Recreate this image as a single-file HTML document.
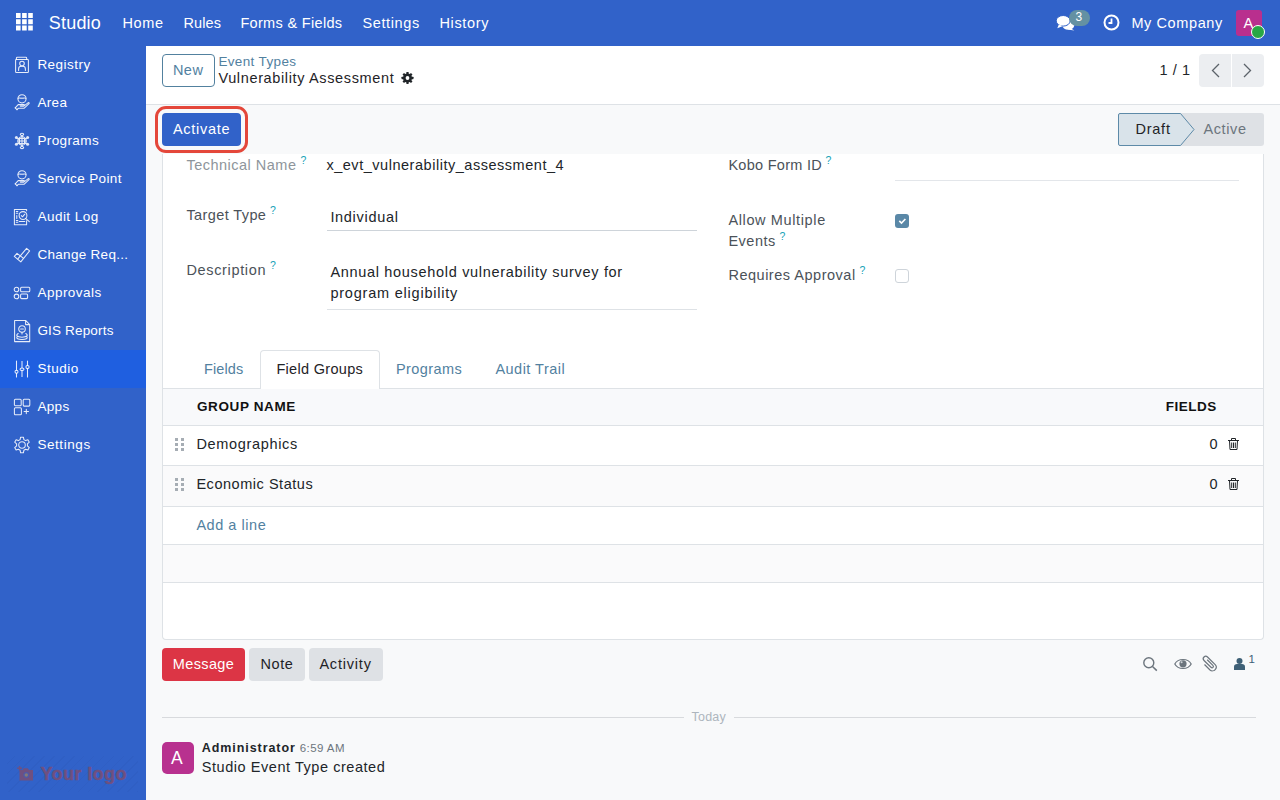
<!DOCTYPE html><html><head><meta charset="utf-8"><style>
*{box-sizing:border-box;margin:0;padding:0}
html,body{width:1280px;height:800px;overflow:hidden}
body{font-family:"Liberation Sans",sans-serif;font-size:14.5px;color:#212529;background:#f8f9fa;position:relative}
.a{position:absolute;white-space:nowrap}
.r{position:absolute}
svg{position:absolute;overflow:visible}
</style></head><body>
<div class="r" style="left:0;top:0;width:1280px;height:46px;background:#3162c9"></div>
<svg style="left:16px;top:13px" width="17" height="18" viewBox="0 0 17 18" fill="#fff"><rect x="0" y="0" width="4.6" height="5" /><rect x="6.1" y="0" width="4.6" height="5" /><rect x="12.2" y="0" width="4.6" height="5" /><rect x="0" y="6.25" width="4.6" height="5" /><rect x="6.1" y="6.25" width="4.6" height="5" /><rect x="12.2" y="6.25" width="4.6" height="5" /><rect x="0" y="12.5" width="4.6" height="5" /><rect x="6.1" y="12.5" width="4.6" height="5" /><rect x="12.2" y="12.5" width="4.6" height="5" /></svg>
<div class="a " style="left:48.80px;top:11.16px;font-size:18.0px;line-height:25px;letter-spacing:0.193px;color:#fff">Studio</div>
<div class="a " style="left:122.40px;top:13.18px;font-size:14.5px;line-height:20px;letter-spacing:0.667px;color:#fff">Home</div>
<div class="a " style="left:183.40px;top:13.18px;font-size:14.5px;line-height:20px;letter-spacing:0.140px;color:#fff">Rules</div>
<div class="a " style="left:240.40px;top:13.18px;font-size:14.5px;line-height:20px;letter-spacing:0.322px;color:#fff">Forms &amp; Fields</div>
<div class="a " style="left:362.40px;top:13.18px;font-size:14.5px;line-height:20px;letter-spacing:0.629px;color:#fff">Settings</div>
<div class="a " style="left:439.40px;top:13.18px;font-size:14.5px;line-height:20px;letter-spacing:0.671px;color:#fff">History</div>
<svg style="left:1056px;top:15px" width="19" height="16" viewBox="0 0 19 16"><ellipse cx="12.3" cy="10.6" rx="6" ry="4.2" fill="#fff"/><path d="M15 13.5 L18.3 15.6 L11.5 14.6z" fill="#fff"/><ellipse cx="7.2" cy="5.8" rx="7" ry="5.3" fill="#fff" stroke="#3162c9" stroke-width="1"/><path d="M2.8 9.5 L1.3 13.2 L7 11z" fill="#fff"/></svg>
<div class="r" style="left:1069px;top:10px;width:20.5px;height:16px;border-radius:8px;background:#6491a3"></div>
<div class="a " style="left:1075.40px;top:8.54px;font-size:12.0px;line-height:17px;letter-spacing:0.644px;color:#fff">3</div>
<svg style="left:1103px;top:14px" width="17" height="17" viewBox="0 0 17 17"><circle cx="8.5" cy="8.5" r="7" fill="none" stroke="#fff" stroke-width="2"/><path d="M8.5 4.5 V9 H5.5" fill="none" stroke="#fff" stroke-width="1.8"/></svg>
<div class="a " style="left:1131.40px;top:13.38px;font-size:14.5px;line-height:20px;letter-spacing:0.601px;color:#fff">My Company</div>
<div class="r" style="left:1236px;top:10px;width:26px;height:26px;border-radius:3px;background:#b92f8e"></div>
<div class="a " style="left:1243.40px;top:12.98px;font-size:14.5px;line-height:20px;letter-spacing:-0.095px;color:#fff">A</div>
<div class="r" style="left:1251px;top:25px;width:14px;height:14px;border-radius:50%;background:#28a745;border:1.5px solid #fff"></div>
<div class="r" style="left:0;top:46px;width:146px;height:754px;background:#3162c9"></div>
<div class="r" style="left:0;top:350px;width:146px;height:38px;background:#1f5fe0"></div>
<div class="a " style="left:37.40px;top:54.82px;font-size:13.5px;line-height:19px;letter-spacing:0.464px;color:#fff">Registry</div>
<div class="a " style="left:37.40px;top:92.82px;font-size:13.5px;line-height:19px;letter-spacing:0.350px;color:#fff">Area</div>
<div class="a " style="left:37.40px;top:130.82px;font-size:13.5px;line-height:19px;letter-spacing:0.389px;color:#fff">Programs</div>
<div class="a " style="left:37.40px;top:168.82px;font-size:13.5px;line-height:19px;letter-spacing:0.378px;color:#fff">Service Point</div>
<div class="a " style="left:37.40px;top:206.82px;font-size:13.5px;line-height:19px;letter-spacing:0.489px;color:#fff">Audit Log</div>
<div class="a " style="left:37.40px;top:244.82px;font-size:13.5px;line-height:19px;letter-spacing:0.303px;color:#fff">Change Req...</div>
<div class="a " style="left:37.40px;top:282.82px;font-size:13.5px;line-height:19px;letter-spacing:0.491px;color:#fff">Approvals</div>
<div class="a " style="left:37.40px;top:320.82px;font-size:13.5px;line-height:19px;letter-spacing:0.171px;color:#fff">GIS Reports</div>
<div class="a " style="left:37.40px;top:358.82px;font-size:13.5px;line-height:19px;letter-spacing:0.521px;color:#fff">Studio</div>
<div class="a " style="left:37.40px;top:396.82px;font-size:13.5px;line-height:19px;letter-spacing:0.350px;color:#fff">Apps</div>
<div class="a " style="left:37.40px;top:434.82px;font-size:13.5px;line-height:19px;letter-spacing:0.568px;color:#fff">Settings</div>
<svg style="left:12px;top:54px" width="20" height="22" viewBox="0 0 20 22"><rect x="3.6" y="5.4" width="12.8" height="13.1" rx="0.8" fill="none" stroke="#fff" stroke-opacity="0.88" stroke-width="1.05" stroke-linecap="round" stroke-linejoin="round"/><path d="M4.4 5.4 V4.2 Q4.4 3.3 5.3 3.3 H13.8 Q14.7 3.3 14.7 4.2 V5.4" fill="none" stroke="#fff" stroke-opacity="0.88" stroke-width="1.05" stroke-linecap="round" stroke-linejoin="round"/><circle cx="10" cy="9.6" r="2.3" fill="none" stroke="#fff" stroke-opacity="0.88" stroke-width="1.05" stroke-linecap="round" stroke-linejoin="round"/><path d="M6.6 16.4 V15 C6.6 13.3 7.9 12.3 9.2 12.3 H10.8 C12.1 12.3 13.4 13.3 13.4 15 V16.4" fill="none" stroke="#fff" stroke-opacity="0.88" stroke-width="1.05" stroke-linecap="round" stroke-linejoin="round"/></svg>
<svg style="left:12px;top:92px" width="20" height="22" viewBox="0 0 20 22"><circle cx="10" cy="6.8" r="4.1" fill="none" stroke="#fff" stroke-opacity="0.88" stroke-width="1.05" stroke-linecap="round" stroke-linejoin="round"/><path d="M6.2 6.3 C7.5 5.2 8.5 7 10 6 C11.5 7 12.5 5.2 13.8 6.3" fill="none" stroke="#fff" stroke-opacity="0.88" stroke-width="1.05" stroke-linecap="round" stroke-linejoin="round"/><path d="M3.2 15.8 L6.2 12.6 H11.8 C12.6 12.6 12.6 14 11.8 14.1 H8.3 M11.8 14.1 L16.3 10.7 C17 10.3 17.5 11.2 17 11.7 L12 16.3 H6.3 L5 17.6" fill="none" stroke="#fff" stroke-opacity="0.88" stroke-width="1.05" stroke-linecap="round" stroke-linejoin="round"/><path d="M3.2 15.8 L5 17.6" fill="none" stroke="#fff" stroke-opacity="0.88" stroke-width="1.05" stroke-linecap="round" stroke-linejoin="round"/></svg>
<svg style="left:12px;top:130px" width="20" height="22" viewBox="0 0 20 22"><circle cx="10" cy="11" r="4.2" fill="none" stroke="#fff" stroke-opacity="0.88" stroke-width="1.05" stroke-linecap="round" stroke-linejoin="round"/><path d="M6 11 H14 M10 7 V15 M7.5 8.5 H12.5 V13.5 H7.5 Z" fill="none" stroke="#fff" stroke-opacity="0.88" stroke-width="1.05" stroke-linecap="round" stroke-linejoin="round" stroke-width="0.8"/><path d="M10 6.8 V5.5 M10 15.2 V16.3 M6.4 9 L5.6 8.4 M13.6 9 L14.4 8.4 M6.4 13 L5.6 13.6 M13.6 13 L14.4 13.6" fill="none" stroke="#fff" stroke-opacity="0.88" stroke-width="1.05" stroke-linecap="round" stroke-linejoin="round"/><ellipse cx="10" cy="4.3" rx="1.7" ry="1.1" fill="none" stroke="#fff" stroke-opacity="0.88" stroke-width="1.05" stroke-linecap="round" stroke-linejoin="round"/><ellipse cx="10" cy="17.5" rx="1.7" ry="1.1" fill="none" stroke="#fff" stroke-opacity="0.88" stroke-width="1.05" stroke-linecap="round" stroke-linejoin="round"/><circle cx="4.4" cy="7.6" r="1.5" fill="#fff" fill-opacity=".85"/><circle cx="15.6" cy="7.6" r="1.5" fill="#fff" fill-opacity=".85"/><circle cx="4.4" cy="14.3" r="1.5" fill="#fff" fill-opacity=".85"/><circle cx="15.6" cy="14.3" r="1.5" fill="#fff" fill-opacity=".85"/></svg>
<svg style="left:12px;top:168px" width="20" height="22" viewBox="0 0 20 22"><circle cx="10" cy="6.8" r="4.1" fill="none" stroke="#fff" stroke-opacity="0.88" stroke-width="1.05" stroke-linecap="round" stroke-linejoin="round"/><path d="M6.2 6.3 C7.5 5.2 8.5 7 10 6 C11.5 7 12.5 5.2 13.8 6.3" fill="none" stroke="#fff" stroke-opacity="0.88" stroke-width="1.05" stroke-linecap="round" stroke-linejoin="round"/><path d="M3.2 15.8 L6.2 12.6 H11.8 C12.6 12.6 12.6 14 11.8 14.1 H8.3 M11.8 14.1 L16.3 10.7 C17 10.3 17.5 11.2 17 11.7 L12 16.3 H6.3 L5 17.6" fill="none" stroke="#fff" stroke-opacity="0.88" stroke-width="1.05" stroke-linecap="round" stroke-linejoin="round"/><path d="M3.2 15.8 L5 17.6" fill="none" stroke="#fff" stroke-opacity="0.88" stroke-width="1.05" stroke-linecap="round" stroke-linejoin="round"/></svg>
<svg style="left:12px;top:206px" width="20" height="22" viewBox="0 0 20 22"><path d="M14.6 4.8 V3.4 H2.4 V18.7 H14.6 V14.8" fill="none" stroke="#fff" stroke-opacity="0.88" stroke-width="1.05" stroke-linecap="round" stroke-linejoin="round"/><circle cx="11" cy="9.5" r="3.9" fill="none" stroke="#fff" stroke-opacity="0.88" stroke-width="1.05" stroke-linecap="round" stroke-linejoin="round"/><path d="M9.3 9.6 L10.5 10.8 L12.8 8.2 M13.8 12.6 L17.3 15.6 M4.3 5.5 H5.8 M4.3 7.2 H5.8 M4.8 9.5 V12.5 M4.3 14.5 H5.8 M4.3 16.3 H5.8 M7.2 15.5 H12.8" fill="none" stroke="#fff" stroke-opacity="0.88" stroke-width="1.05" stroke-linecap="round" stroke-linejoin="round"/></svg>
<svg style="left:12px;top:244px" width="20" height="22" viewBox="0 0 20 22"><path d="M2.3 12.4 L5 9.4 L8.3 11.9 L14.6 4.4 L17.6 6.9 L8.8 17.9 Z M8.3 11.9 L5.5 15.3 M8.3 11.9 L11.2 14.2" fill="none" stroke="#fff" stroke-opacity="0.88" stroke-width="1.05" stroke-linecap="round" stroke-linejoin="round"/></svg>
<svg style="left:12px;top:282px" width="20" height="22" viewBox="0 0 20 22"><circle cx="4.5" cy="7.5" r="2.3" fill="none" stroke="#fff" stroke-opacity="0.88" stroke-width="1.05" stroke-linecap="round" stroke-linejoin="round"/><circle cx="4.5" cy="14.4" r="2.3" fill="none" stroke="#fff" stroke-opacity="0.88" stroke-width="1.05" stroke-linecap="round" stroke-linejoin="round"/><rect x="8.6" y="5.2" width="9.2" height="4.6" rx="1" fill="none" stroke="#fff" stroke-opacity="0.88" stroke-width="1.05" stroke-linecap="round" stroke-linejoin="round"/><rect x="8.6" y="12" width="7" height="4.6" rx="1" fill="none" stroke="#fff" stroke-opacity="0.88" stroke-width="1.05" stroke-linecap="round" stroke-linejoin="round"/></svg>
<svg style="left:12px;top:320px" width="20" height="22" viewBox="0 0 20 22"><path d="M2.6 0.4 H13.6 L17.7 4.6 V21.6 H2.6 Z M13.6 0.4 V4.6 H17.7" fill="none" stroke="#fff" stroke-opacity="0.88" stroke-width="1.05" stroke-linecap="round" stroke-linejoin="round"/><circle cx="10" cy="9" r="3.3" fill="none" stroke="#fff" stroke-opacity="0.88" stroke-width="1.05" stroke-linecap="round" stroke-linejoin="round"/><path d="M8.6 9 H11.4 M10 12.3 L10 14" fill="none" stroke="#fff" stroke-opacity="0.88" stroke-width="1.05" stroke-linecap="round" stroke-linejoin="round"/><path d="M6.2 13.5 C3.5 15 4.5 17 10 17.2 C15.5 17 16.5 15 13.8 13.5 M5.2 16.5 C4 18.5 6 19.5 10 19.5 C14 19.5 16 18.5 14.8 16.5" fill="none" stroke="#fff" stroke-opacity="0.88" stroke-width="1.05" stroke-linecap="round" stroke-linejoin="round"/></svg>
<svg style="left:12px;top:358px" width="20" height="22" viewBox="0 0 20 22"><path d="M4.5 3 V12.3 M4.5 15.3 V19 M15.5 3 V7.4 M15.5 10.6 V19" fill="none" stroke="#fff" stroke-opacity="0.88" stroke-width="1.05" stroke-linecap="round" stroke-linejoin="round"/><path d="M10 3 V19" stroke="#fff" stroke-opacity=".5" stroke-width="1.8"/><circle cx="4.5" cy="13.8" r="1.5" fill="none" stroke="#fff" stroke-opacity="0.88" stroke-width="1.05" stroke-linecap="round" stroke-linejoin="round"/><circle cx="15.5" cy="9" r="1.6" fill="none" stroke="#fff" stroke-opacity="0.88" stroke-width="1.05" stroke-linecap="round" stroke-linejoin="round"/><ellipse cx="10" cy="11.3" rx="2" ry="1.3" fill="#1f5fe0" stroke="#fff" stroke-opacity="0.88" stroke-width="1.05" stroke-linecap="round" stroke-linejoin="round"/></svg>
<svg style="left:12px;top:396px" width="20" height="22" viewBox="0 0 20 22"><rect x="2.4" y="3.3" width="6.8" height="6.4" rx="1" fill="none" stroke="#fff" stroke-opacity="0.88" stroke-width="1.05" stroke-linecap="round" stroke-linejoin="round"/><rect x="11.2" y="3.3" width="6.6" height="6.8" rx="1" fill="none" stroke="#fff" stroke-opacity="0.88" stroke-width="1.05" stroke-linecap="round" stroke-linejoin="round"/><rect x="2.4" y="11.8" width="7" height="7" rx="1" fill="none" stroke="#fff" stroke-opacity="0.88" stroke-width="1.05" stroke-linecap="round" stroke-linejoin="round"/><path d="M14.3 13.2 V17.6 M12.1 15.4 H16.5" fill="none" stroke="#fff" stroke-opacity="0.88" stroke-width="1.05" stroke-linecap="round" stroke-linejoin="round"/></svg>
<svg style="left:12px;top:434px" width="20" height="22" viewBox="0 0 20 22"><path d="M8.6 3.2 H11.4 L11.9 5.6 L13.6 6.6 L15.9 5.8 L17.3 8.2 L15.4 9.8 V11.8 L17.3 13.6 L15.9 16 L13.6 15.2 L11.9 16.2 L11.4 18.8 H8.6 L8.1 16.2 L6.4 15.2 L4.1 16 L2.7 13.6 L4.6 11.8 V9.8 L2.7 8.2 L4.1 5.8 L6.4 6.6 L8.1 5.6 Z" fill="none" stroke="#fff" stroke-opacity="0.88" stroke-width="1.05" stroke-linecap="round" stroke-linejoin="round"/><circle cx="10" cy="11" r="3.3" fill="none" stroke="#fff" stroke-opacity="0.88" stroke-width="1.05" stroke-linecap="round" stroke-linejoin="round"/></svg>
<div class="r" style="left:7px;top:756px;width:131px;height:36px;background:repeating-linear-gradient(-45deg,rgba(0,0,40,0.03) 0 1px,transparent 1px 7px)"></div>
<svg style="left:17px;top:766px" width="17" height="15" viewBox="0 0 17 15"><path d="M2.5 4 H5.5 L6.8 2.3 H10.8 L12 4 H16 V14.6 H2.5 Z" fill="#6f5080"/><circle cx="9.3" cy="9" r="3" fill="#4e5aa8"/><circle cx="9.3" cy="9" r="1.7" fill="#857a78"/><path d="M0.3 2.2 H5 M2.6 0 V4.5" stroke="#6f5080" stroke-width="1.5"/></svg>
<div class="a " style="left:40.40px;top:761.56px;font-size:18.0px;line-height:25px;letter-spacing:0.427px;font-weight:bold;color:#6f5080;-webkit-text-stroke:0.5px #6f5080">Your logo</div>
<div class="r" style="left:146px;top:46px;width:1134px;height:59px;background:#fff;border-bottom:1px solid #dee2e6"></div>
<div class="r" style="left:162px;top:54px;width:53px;height:33px;border:1px solid #52819f;border-radius:4px"></div>
<div class="a " style="left:172.90px;top:59.98px;font-size:14.5px;line-height:20px;letter-spacing:0.510px;color:#52819f">New</div>
<div class="a " style="left:218.40px;top:51.52px;font-size:13.5px;line-height:19px;letter-spacing:0.360px;color:#52819f">Event Types</div>
<div class="a " style="left:218.40px;top:67.78px;font-size:14.5px;line-height:20px;letter-spacing:0.639px;color:#1f2327">Vulnerability Assessment</div>
<svg style="left:401px;top:72px" width="13" height="12" viewBox="-6.5 -6 13 12"><g fill="#212529"><circle r="4.5"/><rect x="-1.15" y="-6" width="2.3" height="3" rx="0.4" transform="rotate(0)"/><rect x="-1.15" y="-6" width="2.3" height="3" rx="0.4" transform="rotate(45)"/><rect x="-1.15" y="-6" width="2.3" height="3" rx="0.4" transform="rotate(90)"/><rect x="-1.15" y="-6" width="2.3" height="3" rx="0.4" transform="rotate(135)"/><rect x="-1.15" y="-6" width="2.3" height="3" rx="0.4" transform="rotate(180)"/><rect x="-1.15" y="-6" width="2.3" height="3" rx="0.4" transform="rotate(225)"/><rect x="-1.15" y="-6" width="2.3" height="3" rx="0.4" transform="rotate(270)"/><rect x="-1.15" y="-6" width="2.3" height="3" rx="0.4" transform="rotate(315)"/></g><circle r="1.9" fill="#fff"/></svg>
<div class="a " style="left:1159.40px;top:60.18px;font-size:14.5px;line-height:20px;letter-spacing:0.644px;color:#212529">1 / 1</div>
<div class="r" style="left:1199px;top:54px;width:32px;height:33px;background:#eceef1;border-radius:4px 0 0 4px"></div>
<div class="r" style="left:1232px;top:54px;width:32px;height:33px;background:#eceef1;border-radius:0 4px 4px 0"></div>
<svg style="left:1211px;top:63px" width="9" height="15" viewBox="0 0 9 15"><path d="M8 1 L1.5 7.5 L8 14" fill="none" stroke="#5c636a" stroke-width="1.3"/></svg>
<svg style="left:1243px;top:63px" width="9" height="15" viewBox="0 0 9 15"><path d="M1 1 L7.5 7.5 L1 14" fill="none" stroke="#5c636a" stroke-width="1.3"/></svg>
<div class="r" style="left:155.3px;top:106px;width:92.9px;height:46.7px;border:3.4px solid #e4473a;border-radius:11px"></div>
<div class="r" style="left:162px;top:113px;width:79px;height:33px;background:#3162c9;border-radius:4px"></div>
<div class="a " style="left:172.90px;top:119.18px;font-size:14.5px;line-height:20px;letter-spacing:0.725px;color:#fff">Activate</div>
<svg style="left:1118px;top:113px" width="146" height="33" viewBox="0 0 146 33"><path d="M62 0 H143 A3 3 0 0 1 146 3 V30 A3 3 0 0 1 143 33 H62 Z" fill="#dee1e5"/><path d="M2 0.5 H62.5 L76 16.5 L62.5 32.5 H2 A1.5 1.5 0 0 1 0.5 31 V2 A1.5 1.5 0 0 1 2 0.5 Z" fill="#d9e3ea" stroke="#5d8aa8" stroke-width="1"/></svg>
<div class="a " style="left:1135.40px;top:118.78px;font-size:14.5px;line-height:20px;letter-spacing:0.773px;color:#1f2327">Draft</div>
<div class="a " style="left:1203.40px;top:118.78px;font-size:14.5px;line-height:20px;letter-spacing:0.637px;color:#6c757d">Active</div>
<div class="r" style="left:162px;top:154px;width:1102px;height:486px;background:#fff;border:1px solid #dee2e6;border-top:none;border-radius:0 0 4px 4px"></div>
<div class="a " style="left:186.40px;top:154.98px;font-size:14.5px;line-height:20px;letter-spacing:0.492px;color:#8e959b">Technical Name</div>
<div class="a " style="left:300.60px;top:153.36px;font-size:10.5px;line-height:15px;letter-spacing:-0.531px;color:#17a2b8">?</div>
<div class="a " style="left:326.40px;top:154.98px;font-size:14.5px;line-height:20px;letter-spacing:0.529px">x_evt_vulnerability_assessment_4</div>
<div class="a " style="left:186.40px;top:204.98px;font-size:14.5px;line-height:20px;letter-spacing:0.402px;color:#4b5259">Target Type</div>
<div class="a " style="left:270.10px;top:203.36px;font-size:10.5px;line-height:15px;letter-spacing:-0.531px;color:#17a2b8">?</div>
<div class="a " style="left:330.40px;top:207.18px;font-size:14.5px;line-height:20px;letter-spacing:0.692px">Individual</div>
<div class="r" style="left:327px;top:230px;width:370px;height:1px;background:#ced4da"></div>
<div class="a " style="left:186.40px;top:259.98px;font-size:14.5px;line-height:20px;letter-spacing:0.655px;color:#4b5259">Description</div>
<div class="a " style="left:270.10px;top:258.36px;font-size:10.5px;line-height:15px;letter-spacing:-0.531px;color:#17a2b8">?</div>
<div class="a " style="left:330.40px;top:262.48px;font-size:14.5px;line-height:20px;letter-spacing:0.685px">Annual household vulnerability survey for</div>
<div class="a " style="left:330.40px;top:283.38px;font-size:14.5px;line-height:20px;letter-spacing:0.784px">program eligibility</div>
<div class="r" style="left:327px;top:309px;width:370px;height:1px;background:#dee2e6"></div>
<div class="a " style="left:728.40px;top:154.68px;font-size:14.5px;line-height:20px;letter-spacing:0.278px;color:#4b5259">Kobo Form ID</div>
<div class="a " style="left:825.60px;top:153.06px;font-size:10.5px;line-height:15px;letter-spacing:-0.531px;color:#17a2b8">?</div>
<div class="r" style="left:895px;top:180px;width:344px;height:1px;background:#e3e6ea"></div>
<div class="a " style="left:728.40px;top:209.98px;font-size:14.5px;line-height:20px;letter-spacing:0.628px;color:#4b5259">Allow Multiple</div>
<div class="a " style="left:728.40px;top:230.58px;font-size:14.5px;line-height:20px;letter-spacing:0.512px;color:#4b5259">Events</div>
<div class="a " style="left:779.60px;top:228.96px;font-size:10.5px;line-height:15px;letter-spacing:-0.531px;color:#17a2b8">?</div>
<div class="r" style="left:895px;top:214px;width:14px;height:14px;border-radius:3px;background:#5a88a7"></div>
<svg style="left:895px;top:214px" width="14" height="14" viewBox="0 0 14 14"><path d="M4.3 6.9 L6.5 9.1 L10.4 5" fill="none" stroke="#fff" stroke-width="1.6"/></svg>
<div class="a " style="left:728.40px;top:264.98px;font-size:14.5px;line-height:20px;letter-spacing:0.518px;color:#4b5259">Requires Approval</div>
<div class="a " style="left:859.60px;top:263.36px;font-size:10.5px;line-height:15px;letter-spacing:-0.531px;color:#17a2b8">?</div>
<div class="r" style="left:895px;top:269px;width:14px;height:14px;border-radius:3px;background:#fff;border:1px solid #ced4da"></div>
<div class="r" style="left:163px;top:388px;width:1100px;height:1px;background:#dee2e6"></div>
<div class="r" style="left:260px;top:350px;width:120px;height:39px;background:#fff;border:1px solid #dee2e6;border-bottom:none;border-radius:4px 4px 0 0"></div>
<div class="a " style="left:203.90px;top:358.58px;font-size:14.5px;line-height:20px;letter-spacing:0.155px;color:#52819f">Fields</div>
<div class="a " style="left:276.40px;top:358.58px;font-size:14.5px;line-height:20px;letter-spacing:0.306px;color:#1f2327">Field Groups</div>
<div class="a " style="left:395.90px;top:358.58px;font-size:14.5px;line-height:20px;letter-spacing:0.440px;color:#52819f">Programs</div>
<div class="a " style="left:495.40px;top:358.58px;font-size:14.5px;line-height:20px;letter-spacing:0.482px;color:#52819f">Audit Trail</div>
<div class="r" style="left:163px;top:389px;width:1100px;height:36px;background:#f8f9fb"></div>
<div class="r" style="left:163px;top:425px;width:1100px;height:1px;background:#dee2e6"></div>
<div class="a " style="left:196.90px;top:396.62px;font-size:13.5px;line-height:19px;letter-spacing:0.624px;font-weight:bold;color:#111">GROUP NAME</div>
<div class="a " style="left:1165.70px;top:396.82px;font-size:13.5px;line-height:19px;letter-spacing:0.499px;font-weight:bold;color:#111">FIELDS</div>
<div class="r" style="left:163px;top:466px;width:1100px;height:40px;background:#fafafb"></div>
<div class="r" style="left:163px;top:545px;width:1100px;height:37px;background:#fafafb"></div>
<div class="r" style="left:163px;top:465px;width:1100px;height:1px;background:#dee2e6"></div>
<div class="r" style="left:163px;top:506px;width:1100px;height:1px;background:#dee2e6"></div>
<div class="r" style="left:163px;top:544px;width:1100px;height:1px;background:#dee2e6"></div>
<div class="r" style="left:163px;top:582px;width:1100px;height:1px;background:#dee2e6"></div>
<svg style="left:175px;top:438px" width="9" height="13" viewBox="0 0 9 13" fill="#a6adb4"><rect x="0" y="0" width="3" height="3"/><rect x="6" y="0" width="3" height="3"/><rect x="0" y="5" width="3" height="3"/><rect x="6" y="5" width="3" height="3"/><rect x="0" y="10" width="3" height="3"/><rect x="6" y="10" width="3" height="3"/></svg>
<div class="a " style="left:196.40px;top:434.28px;font-size:14.5px;line-height:20px;letter-spacing:0.665px">Demographics</div>
<div class="a " style="left:1209.40px;top:433.88px;font-size:14.5px;line-height:20px;letter-spacing:0.844px">0</div>
<svg style="left:1228px;top:438px" width="11" height="12" viewBox="0 0 11 12"><path d="M0 2.5 H11 M3.5 2.5 V0.5 H7.5 V2.5 M1.5 2.5 L2 11.5 H9 L9.5 2.5 M3.7 4.5 V10 M5.5 4.5 V10 M7.3 4.5 V10" fill="none" stroke="#212529" stroke-width="1"/></svg>
<svg style="left:175px;top:478px" width="9" height="13" viewBox="0 0 9 13" fill="#a6adb4"><rect x="0" y="0" width="3" height="3"/><rect x="6" y="0" width="3" height="3"/><rect x="0" y="5" width="3" height="3"/><rect x="6" y="5" width="3" height="3"/><rect x="0" y="10" width="3" height="3"/><rect x="6" y="10" width="3" height="3"/></svg>
<div class="a " style="left:196.40px;top:473.98px;font-size:14.5px;line-height:20px;letter-spacing:0.536px">Economic Status</div>
<div class="a " style="left:1209.40px;top:473.98px;font-size:14.5px;line-height:20px;letter-spacing:0.844px">0</div>
<svg style="left:1228px;top:478px" width="11" height="12" viewBox="0 0 11 12"><path d="M0 2.5 H11 M3.5 2.5 V0.5 H7.5 V2.5 M1.5 2.5 L2 11.5 H9 L9.5 2.5 M3.7 4.5 V10 M5.5 4.5 V10 M7.3 4.5 V10" fill="none" stroke="#212529" stroke-width="1"/></svg>
<div class="a " style="left:196.40px;top:514.78px;font-size:14.5px;line-height:20px;letter-spacing:0.536px;color:#52819f">Add a line</div>
<div class="r" style="left:162px;top:648px;width:83px;height:33px;background:#dc3545;border-radius:4px"></div>
<div class="r" style="left:249px;top:648px;width:56px;height:33px;background:#dee1e5;border-radius:4px"></div>
<div class="r" style="left:309px;top:648px;width:74px;height:33px;background:#dee1e5;border-radius:4px"></div>
<div class="a " style="left:172.80px;top:653.98px;font-size:14.5px;line-height:20px;letter-spacing:0.361px;color:#fff">Message</div>
<div class="a " style="left:260.40px;top:653.98px;font-size:14.5px;line-height:20px;letter-spacing:0.629px;color:#1f2327">Note</div>
<div class="a " style="left:319.40px;top:653.98px;font-size:14.5px;line-height:20px;letter-spacing:0.804px;color:#1f2327">Activity</div>
<svg style="left:1143px;top:657px" width="15" height="14" viewBox="0 0 15 14"><circle cx="5.8" cy="5.8" r="5" fill="none" stroke="#6c757d" stroke-width="1.4"/><path d="M9.5 9.5 L13.8 13.6" stroke="#6c757d" stroke-width="1.5"/></svg>
<svg style="left:1174px;top:658px" width="18" height="12" viewBox="0 0 18 12"><path d="M0.8 6 C4 0 14 0 17.2 6 C14 12 4 12 0.8 6 Z" fill="none" stroke="#6c757d" stroke-width="1.2"/><circle cx="9" cy="5.8" r="3.6" fill="#6c757d"/><circle cx="7.6" cy="4.3" r="1" fill="#d0d4d8"/></svg>
<svg style="left:1202px;top:655px" width="15" height="16" viewBox="0 0 15 16"><path d="M12.5 9.5 L7 15 C5.5 16.2 3 16 1.8 14.6 C0.5 13.2 0.5 11 1.8 9.7 L9.5 2 C10.5 1 12 1 13 2 C14 3 14 4.5 13 5.5 L6 12.3 C5.4 12.9 4.5 12.9 4 12.4 C3.5 11.9 3.5 11 4.1 10.4 L9.8 4.8" fill="none" stroke="#6c757d" stroke-width="1.2" transform="translate(15,0) scale(-1,1)"/></svg>
<svg style="left:1234px;top:658px" width="11" height="12" viewBox="0 0 11 12"><circle cx="5.5" cy="3" r="3" fill="#3e6076"/><path d="M0 12 V8.5 C0 7 1.3 6 3 6 H8 C9.7 6 11 7 11 8.5 V12 Z" fill="#3e6076"/></svg>
<div class="a " style="left:1248.40px;top:651.02px;font-size:11.5px;line-height:16px;letter-spacing:0.603px;color:#3e6076">1</div>
<div class="r" style="left:162px;top:717px;width:522px;height:1px;background:#d8dadd"></div>
<div class="r" style="left:734px;top:717px;width:522px;height:1px;background:#d8dadd"></div>
<div class="a " style="left:691.40px;top:708.17px;font-size:12.5px;line-height:18px;letter-spacing:0.270px;color:#adb5bd">Today</div>
<div class="r" style="left:162px;top:742px;width:32px;height:32px;background:#b8318f;border-radius:5px"></div>
<div class="a " style="left:170.90px;top:745.94px;font-size:17.5px;line-height:24px;letter-spacing:-0.042px;color:#fff">A</div>
<div class="a " style="left:201.80px;top:739.07px;font-size:12.5px;line-height:18px;letter-spacing:0.923px;font-weight:bold;color:#212529">Administrator</div>
<div class="a " style="left:299.70px;top:740.22px;font-size:11.5px;line-height:16px;letter-spacing:0.432px;color:#6c757d">6:59 AM</div>
<div class="a " style="left:201.80px;top:757.18px;font-size:14.5px;line-height:20px;letter-spacing:0.549px;color:#212529">Studio Event Type created</div>
</body></html>
